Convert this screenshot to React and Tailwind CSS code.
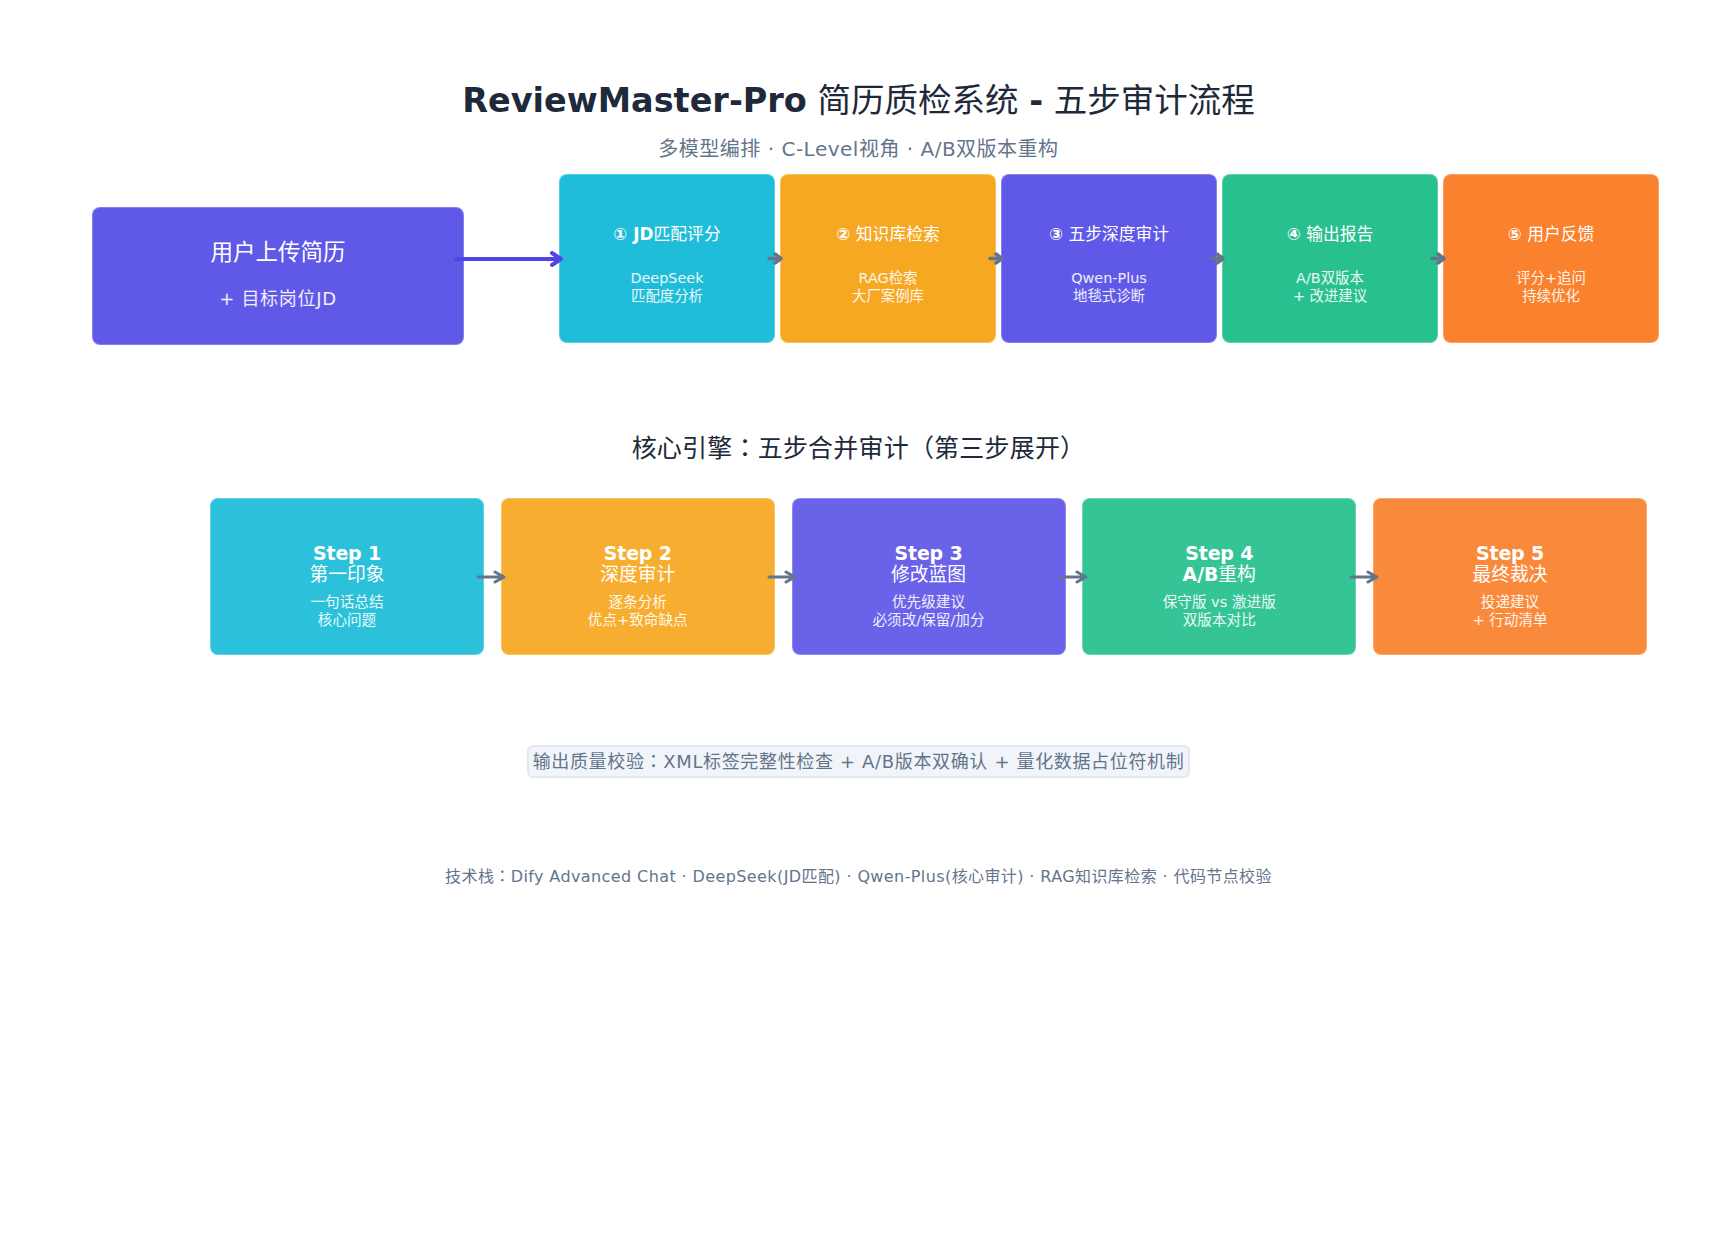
import React from 'react'

// fullwidth colon and brackets sit centred in the TC cut, like the reference
const Punct = ({ children }) => <span className="font-['Noto_Sans_CJK_TC','Noto_Sans_CJK_SC',sans-serif] leading-[0]">{children}</span>

const stages = [
  { bg: 'bg-[#1fbdd9]', title: <><b>① JD</b>匹配评分</>, lines: ['DeepSeek', '匹配度分析'] },
  { bg: 'bg-[#f6a823]', title: <><b>②</b> 知识库检索</>, lines: ['RAG检索', '大厂案例库'] },
  { bg: 'bg-[#6058e7]', title: <><b>③</b> 五步深度审计</>, lines: ['Qwen-Plus', '地毯式诊断'] },
  { bg: 'bg-[#28c08e]', title: <><b>④</b> 输出报告</>, lines: ['A/B双版本', '+ 改进建议'] },
  { bg: 'bg-[#fa812d]', title: <><b>⑤</b> 用户反馈</>, lines: ['评分+追问', '持续优化'] },
]

const steps = [
  { bg: 'bg-[#2bc1da]', step: 'Step 1', name: '第一印象', lines: ['一句话总结', '核心问题'] },
  { bg: 'bg-[#f7ae30]', step: 'Step 2', name: '深度审计', lines: ['逐条分析', '优点+致命缺点'] },
  { bg: 'bg-[#6a62e9]', step: 'Step 3', name: '修改蓝图', lines: ['优先级建议', '必须改/保留/加分'] },
  { bg: 'bg-[#34c496]', step: 'Step 4', name: <><b>A/B</b>重构</>, lines: ['保守版 vs 激进版', '双版本对比'] },
  { bg: 'bg-[#fa8a3b]', step: 'Step 5', name: '最终裁决', lines: ['投递建议', '+ 行动清单'] },
]

const Arrow = ({ className, width, half, depth, stroke, color }) => {
  const mid = half + 3
  const tip = width - 2
  return (
    <svg className={className} width={width} height={mid * 2} viewBox={`0 0 ${width} ${mid * 2}`} fill="none">
      <path
        d={`M2 ${mid}H${tip}M${tip - depth} ${mid - half}L${tip} ${mid}L${tip - depth} ${mid + half}`}
        stroke={color}
        strokeWidth={stroke}
        strokeLinecap="round"
        strokeLinejoin="round"
      />
    </svg>
  )
}

export default function App() {
  return (
    <div className="min-h-[1245px] bg-white font-['DejaVu_Sans','Noto_Sans_CJK_SC',sans-serif] pt-[79px]">
      <h1 className="text-center text-[33.5px] leading-[44px] font-normal text-[#1e293b]">
        <b>ReviewMaster-Pro</b> 简历质检系统 <b>-</b> 五步审计流程
      </h1>
      <p className="mt-[13px] text-center text-[20px] leading-[26px] tracking-[0.5px] text-[#64748b]">
        多模型编排 · C-Level视角 · A/B双版本重构
      </p>

      <div className="relative mt-[12px] flex items-start pl-[92px]">
        <div className="mt-[33px] mr-[95px] flex h-[138px] w-[372px] flex-col items-center rounded-lg border border-white/25 bg-[#6058e7] pt-[29px] text-white">
          <div className="text-[22.5px] leading-[30px]">用户上传简历</div>
          <div className="mt-[20px] text-[18px] leading-[24px] tracking-[0.7px] text-white/90">+ 目标岗位JD</div>
        </div>
        <div className="flex gap-[5px]">
          {stages.map((s, i) => (
            <div key={i} className={`flex h-[169px] w-[216px] flex-col items-center rounded-lg border border-white/25 pt-[49px] text-white ${s.bg}`}>
              <div className="text-[16.8px] leading-[20px]">{s.title}</div>
              <div className="mt-[25px] text-center text-[14.4px] leading-[18px] text-white/90">
                {s.lines.map((l) => <div key={l}>{l}</div>)}
              </div>
            </div>
          ))}
        </div>
        <Arrow className="absolute left-[454px] top-[76px]" width={109} half={6} depth={9} stroke={4} color="#4f46e5" />
        <Arrow className="absolute left-[767px] top-[77px]" width={16} half={4.5} depth={6} stroke={3.5} color="#64748b" />
        <Arrow className="absolute left-[988px] top-[77px]" width={16} half={4.5} depth={6} stroke={3.5} color="#64748b" />
        <Arrow className="absolute left-[1209px] top-[77px]" width={16} half={4.5} depth={6} stroke={3.5} color="#64748b" />
        <Arrow className="absolute left-[1430px] top-[77px]" width={16} half={4.5} depth={6} stroke={3.5} color="#64748b" />
      </div>

      <h2 className="mt-[87px] text-center text-[25px] leading-[34px] tracking-[0.2px] font-normal text-[#1e293b]">
        核心引擎<Punct>：</Punct>五步合并审计<Punct>（</Punct>第三步展开<Punct>）</Punct>
      </h2>

      <div className="relative mt-[32px] flex gap-[16.75px] pl-[210px]">
        {steps.map((s) => (
          <div key={s.step} className={`flex h-[157px] w-[274px] flex-col items-center rounded-lg border border-white/25 pt-[43px] text-white ${s.bg}`}>
            <div className="text-[19px] leading-[23px] tracking-[-0.2px] font-bold">{s.step}</div>
            <div className="text-[18.8px] leading-[20px]">{s.name}</div>
            <div className="mt-[8px] text-center text-[14.6px] leading-[18px] text-white/90">
              {s.lines.map((l) => <div key={l}>{l}</div>)}
            </div>
          </div>
        ))}
        <Arrow className="absolute left-[476px] top-[71px]" width={30} half={5} depth={9} stroke={3} color="#64748b" />
        <Arrow className="absolute left-[767px] top-[71px]" width={30} half={5} depth={9} stroke={3} color="#64748b" />
        <Arrow className="absolute left-[1058px] top-[71px]" width={30} half={5} depth={9} stroke={3} color="#64748b" />
        <Arrow className="absolute left-[1349px] top-[71px]" width={30} half={5} depth={9} stroke={3} color="#64748b" />
      </div>

      <div className="mt-[90px] flex justify-center">
        <div className="rounded-md border-2 border-[#e2e8f0] bg-[#f1f5f9] px-[4px] text-[18px] leading-[29px] tracking-[0.65px] text-[#64748b]">
          输出质量校验<Punct>：</Punct>XML标签完整性检查 + A/B版本双确认 + 量化数据占位符机制
        </div>
      </div>

      <p className="mt-[88px] text-center text-[16px] leading-[22px] tracking-[0.4px] text-[#64748b]">
        技术栈<Punct>：</Punct>Dify Advanced Chat · DeepSeek(JD匹配) · Qwen-Plus(核心审计) · RAG知识库检索 · 代码节点校验
      </p>
    </div>
  )
}
